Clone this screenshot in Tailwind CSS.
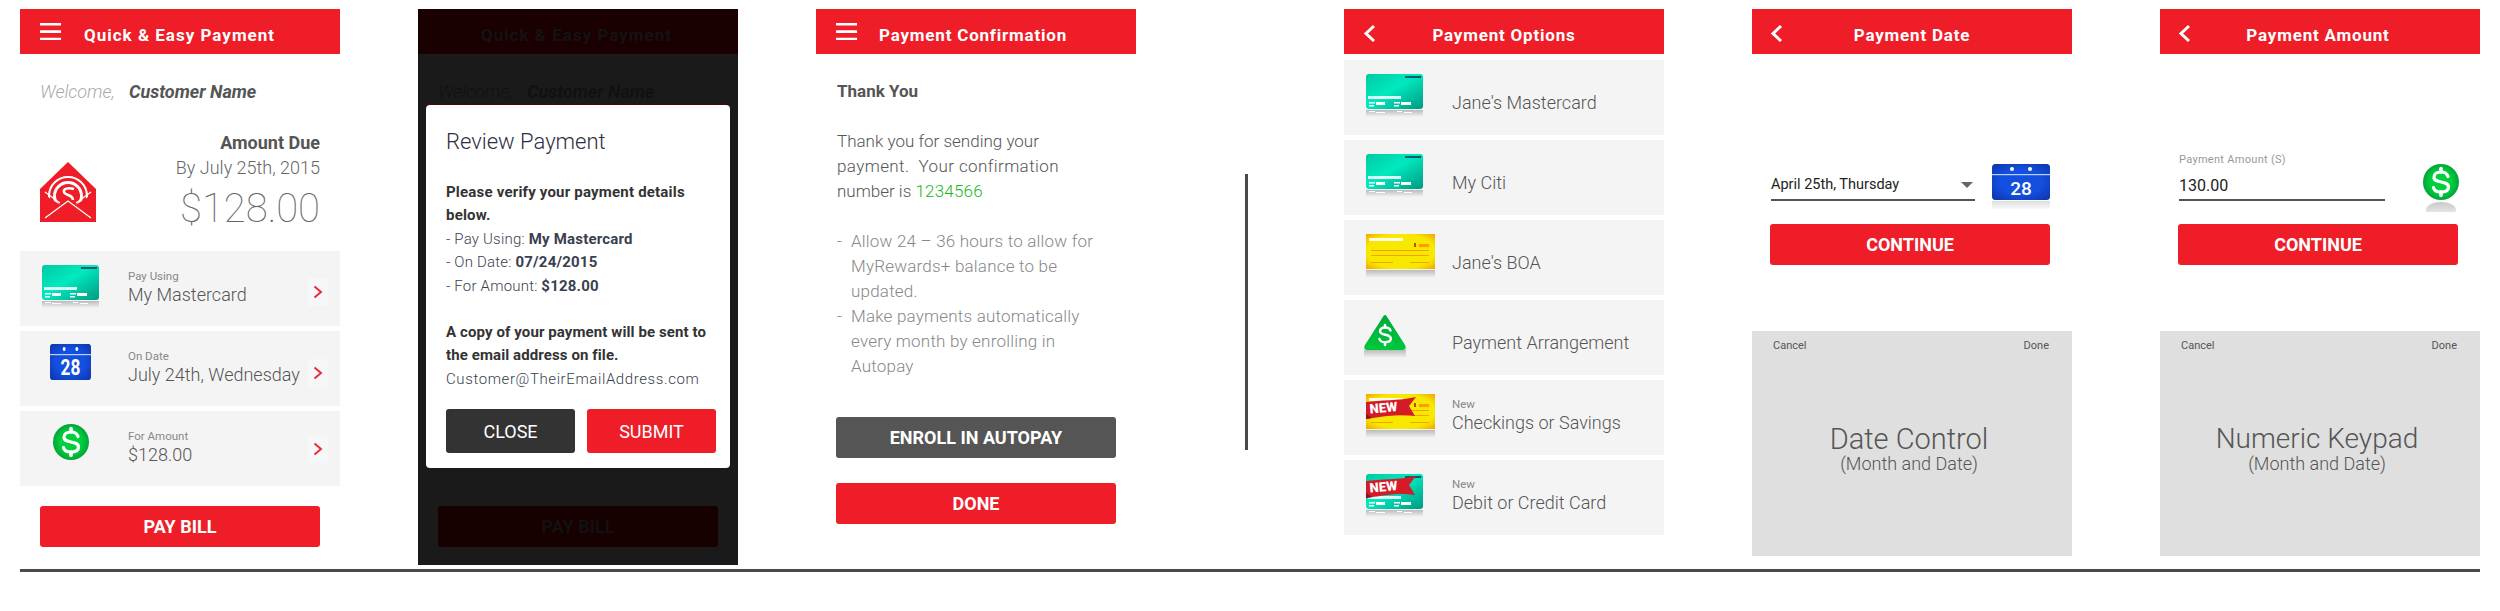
<!DOCTYPE html>
<html>

<head>
    <meta name="viewport" content="width=device-width,initial-scale=1.0">
    <title>Payment flow</title>
    <script src="https://cdn.jsdelivr.net/npm/@tailwindcss/browser@4"></script>
</head>

<body class="bg-white font-['Roboto',sans-serif] overflow-hidden">
    <!-- shared icons -->
    <svg class="absolute w-0 h-0">
        <defs>
            <linearGradient id="teal" x1="0" y1="0" x2="1" y2="1">
                <stop offset="0" stop-color="#00c9a0" />
                <stop offset="0.45" stop-color="#00eabf" />
                <stop offset="1" stop-color="#009a80" />
            </linearGradient>
            <linearGradient id="fade" x1="0" y1="0" x2="0" y2="1">
                <stop offset="0" stop-color="#bbb" />
                <stop offset="1" stop-color="#f4f4f4" />
            </linearGradient>
            <radialGradient id="yellow" r="0.7">
                <stop offset="0.7" stop-color="#f8e800" />
                <stop offset="1" stop-color="#f0a800" />
            </radialGradient>
            <radialGradient id="green" r="0.55">
                <stop offset="0.55" stop-color="#00cf3e" />
                <stop offset="1" stop-color="#009a35" />
            </radialGradient>
            <linearGradient id="greenup" x1="0" y1="0" x2="0" y2="1">
                <stop offset="0" stop-color="#00a83a" />
                <stop offset="1" stop-color="#00c83c" />
            </linearGradient>
            <radialGradient id="blue" r="0.7">
                <stop offset="0.5" stop-color="#1450e0" />
                <stop offset="1" stop-color="#0c34a8" />
            </radialGradient>
        </defs>
        <symbol id="card" viewBox="0 0 57 43">
            <rect y="0" width="57" height="35" rx="3" fill="url(#teal)" />
            <rect x="39" y="2" width="16" height="2" fill="#124" opacity=".7" />
            <rect x="2" y="22" width="33" height="3" fill="#fff" opacity=".85" />
            <path d="M3 28h6v1.500h-6zM10 28h9v3h-9zM28 28h6v1.500h-6zM35 28h10v3h-10zM3 31h5v1.500h-5zM28 31h5v1.500h-5z" fill="#fff" />
            <rect y="36" width="57" height="7" fill="url(#fade)" />
            <path d="M3 37h6v1h-6zM10 38h9v1h-9zM31 37h5v1h-5zM38 38h8v1h-8z" fill="#fff" />
        </symbol>
        <symbol id="check" viewBox="0 0 69 45">
            <rect width="69" height="35" fill="url(#yellow)" />
            <rect x="3" y="4" width="34" height="3" fill="#fff" opacity=".9" />
            <path d="M48 9h2v4h-2z" fill="#c40" />
            <path d="M53 10h10v3h-10z" fill="#f90" />
            <path d="M5 16h58v.7h-58zM5 21h58v.7h-58zM5 28h22v.7h-22zM44 28h19v.7h-19z" fill="#f58a00" />
            <rect y="36" width="69" height="8" fill="url(#fade)" />
        </symbol>
        <symbol id="ribbon" viewBox="0 0 50 25">
            <path d="M0 5C14 3 32 4 50 0L43 9L49 19C32 16 14 20 0 22Z" fill="#d41c28" />
            <path d="M0 17v5l6 -1z" fill="#8e1018" />
        </symbol>
        <symbol id="calendar" viewBox="0 0 58 45">
            <rect width="58" height="36" rx="3.500" fill="url(#blue)" />
            <rect y="10" width="58" height="1.200" fill="#bcd0ff" />
            <circle cx="20" cy="5" r="2" fill="#fff" />
            <circle cx="38" cy="5" r="2" fill="#fff" />
            <rect y="37" width="58" height="8" fill="url(#fade)" opacity=".5" />
        </symbol>
        <symbol id="coin" viewBox="0 0 36 48">
            <ellipse cx="18" cy="46" rx="15" ry="8" fill="url(#fade)" opacity=".8" />
            <circle cx="18" cy="18" r="18" fill="url(#green)" />
            <path d="M25 12.500C24 9 21 8 18 8C14 8 11 10 11 13.200C11 20 25.500 16 25.500 23C25.500 26.500 22 28 18 28C14 28 11 26.500 10.500 23.500" fill="none" stroke="#fff" stroke-width="3.200" stroke-linecap="round" />
            <path d="M18 4.500V8M18 28V31.500" stroke="#fff" stroke-width="3.600" stroke-linecap="round" />
        </symbol>
        <symbol id="triangle" viewBox="0 0 42 45">
            <rect x="0" y="36" width="42" height="8" fill="url(#fade)" />
            <path d="M21 1C21.500 1 22 1.500 22.500 2L41 31C42.500 34 41.500 36 39 36H3C.5 36 -.5 34 1 31L19.500 2C20 1.500 20.500 1 21 1Z" fill="url(#greenup)" />
            <path d="M26.500 16.500C26 14.500 24 13.500 21 13.500C18 13.500 16 15 16 17.200C16 22 26.800 19.500 26.800 24.500C26.800 27 24 28.200 21 28.200C18 28.200 16 27 15.500 25" fill="none" stroke="#fff" stroke-width="2.400" stroke-linecap="round" />
            <path d="M21 11V13.500M21 28.200V31" stroke="#fff" stroke-width="2.600" stroke-linecap="round" />
        </symbol>
        <symbol id="menu" viewBox="0 0 21 17">
            <path d="M0 0h21v2.500H0zM0 7.300h21v2.700H0zM0 14.700h21v2.300H0z" fill="#fff" />
        </symbol>
        <symbol id="back" viewBox="0 0 13 19">
            <path d="M11 2L3 9.500L11 17" fill="none" stroke="#fff" stroke-width="3" />
        </symbol>
        <symbol id="chev" viewBox="0 0 10 14">
            <path d="M1.500 1.500L8 7L1.500 12.500" fill="none" stroke="#ee2a34" stroke-width="2" />
        </symbol>
    </svg>

    <div class="h-[611px] w-[2500px] pt-[9px] pl-[20px] flex flex-col">
        <div class="flex h-[556px] text-[#555]">

            <!-- quick pay -->
            <section class="w-[320px] shrink-0 flex flex-col">
                <header class="h-[45px] bg-[#ee1d27] flex items-center pl-[20px] text-white">
                    <svg class="w-[21px] h-[17px]"><use href="#menu" /></svg>
                    <span class="ml-[23px] mt-[8px] text-[17px] font-bold tracking-[1px]">Quick &amp; Easy Payment</span>
                </header>
                <div class="px-[20px] h-[197px] flex flex-col">
                    <p class="mt-[26px] text-[18px] leading-[24px] italic"><span class="font-light text-[#aaa] mr-[14px]">Welcome,</span><span class="font-bold">Customer Name</span></p>
                    <div class="flex mt-[27px] justify-between items-end">
                        <svg class="w-[56px] h-[60px] mb-[11px]" viewBox="0 0 56 60">
                            <path d="M28 0L56 27V60H0V27Z" fill="#ee1d27" />
                            <circle cx="28" cy="34" r="19" fill="none" stroke="#fff" stroke-width="2" />
                            <circle cx="28" cy="34" r="13.500" fill="none" stroke="#fff" stroke-width="3" />
                            <path d="M34 27C28 25 23 27 24 30C25 34 33 32 33 38" fill="none" stroke="#fff" stroke-width="2.500" />
                            <path d="M0 30L22 44L28 39L34 44L56 30V60H0Z" fill="#ee1d27" />
                            <path d="M5 30L20 41M51 30L36 41M5 56L28 39L51 56" stroke="#fff" stroke-width="1.200" fill="none" />
                        </svg>
                        <div class="text-right">
                            <p class="text-[18px] leading-[24px] font-bold">Amount Due</p>
                            <p class="text-[18px] leading-[25px] font-light text-[#666]">By July 25th, 2015</p>
                            <p class="mt-[5px] text-[40px] leading-[48px] font-thin text-[#666]">$128.00</p>
                        </div>
                    </div>
                </div>
                <div class="flex flex-col gap-[5px]">
                    <div class="h-[75px] bg-[#f4f4f5] flex relative">
                        <svg class="w-[57px] h-[43px] ml-[22px] mt-[14px]"><use href="#card" /></svg>
                        <div class="ml-[29px] mt-[18px]">
                            <p class="text-[11.500px] leading-[14px] text-[#888]">Pay Using</p>
                            <p class="text-[18px] leading-[23px] font-light">My Mastercard</p>
                        </div>
                        <span class="absolute left-[288px] top-[27px] w-[20px] h-[28px] bg-[#f6f7f9] flex items-center justify-center"><svg class="w-[10px] h-[14px]"><use href="#chev" /></svg></span>
                    </div>
                    <div class="h-[75px] bg-[#f4f4f5] flex relative">
                        <svg class="w-[41px] h-[36px] ml-[30px] mt-[13px]" viewBox="0 0 58 36" preserveAspectRatio="none"><use href="#calendar" width="58" height="45" /><text x="29" y="31" text-anchor="middle" font-size="22" font-weight="700" fill="#fff" font-family="Roboto" textLength="28" lengthAdjust="spacingAndGlyphs">28</text></svg>
                        <div class="ml-[37px] mt-[18px]">
                            <p class="text-[11.500px] leading-[14px] text-[#888]">On Date</p>
                            <p class="text-[18px] leading-[23px] font-light whitespace-nowrap">July 24th, Wednesday</p>
                        </div>
                        <span class="absolute left-[288px] top-[28px] w-[20px] h-[28px] bg-[#f6f7f9] flex items-center justify-center"><svg class="w-[10px] h-[14px]"><use href="#chev" /></svg></span>
                    </div>
                    <div class="h-[75px] bg-[#f4f4f5] flex relative">
                        <svg class="w-[36px] h-[36px] ml-[33px] mt-[13px]" viewBox="0 0 36 36"><use href="#coin" width="36" height="48" /></svg>
                        <div class="ml-[39px] mt-[18px]">
                            <p class="text-[11.500px] leading-[14px] text-[#888]">For Amount</p>
                            <p class="text-[18px] leading-[23px] font-light">$128.00</p>
                        </div>
                        <span class="absolute left-[288px] top-[24px] w-[20px] h-[28px] bg-[#f6f7f9] flex items-center justify-center"><svg class="w-[10px] h-[14px]"><use href="#chev" /></svg></span>
                    </div>
                </div>
                <button class="mx-[20px] mt-[20px] h-[41px] rounded-[3px] bg-[#ee1d27] text-white text-[18px] font-bold">PAY BILL</button>
            </section>

            <!-- review dialog over dimmed quick pay -->
            <section class="w-[320px] h-[556px] shrink-0 ml-[78px] flex flex-col relative bg-[#1a1a1a]">
                <header class="h-[45px] bg-[#1a0000] flex items-center justify-center text-[#131313]">
                    <span class="ml-[-3px] mt-[8px] text-[17px] font-bold tracking-[1px]">Quick &amp; Easy Payment</span>
                </header>
                <p class="px-[20px] mt-[26px] text-[18px] leading-[24px] italic text-[#111]"><span class="font-light mr-[14px]">Welcome,</span><span class="font-bold">Customer Name</span></p>
                <button class="absolute left-[20px] right-[20px] top-[497px] h-[41px] rounded-[3px] bg-[#170000] text-[#111] text-[18px] font-bold">PAY BILL</button>
                <div class="absolute left-[8px] top-[96px] w-[304px] h-[363px] bg-white rounded-[4px] px-[20px] shadow-[0_-1px_0_#500]">
                    <h2 class="mt-[22px] text-[22px] leading-[30px] font-light text-[#2b3042]">Review Payment</h2>
                    <div class="mt-[24px] text-[15px] leading-[23.400px] text-[#3a3f50] font-light tracking-[0.2px]">
                        <p class="font-bold text-[#333]">Please verify your payment details below.</p>
                        <p>- Pay Using: <b class="font-bold">My Mastercard</b></p>
                        <p>- On Date: <b class="font-bold">07/24/2015</b></p>
                        <p>- For Amount: <b class="font-bold">$128.00</b></p>
                        <p class="mt-[23px] font-bold text-[#333] tracking-[0.1px]">A copy of your payment will be sent to the email address on file.</p>
                        <p class="whitespace-nowrap tracking-[0.6px]">Customer@TheirEmailAddress.com</p>
                    </div>
                    <div class="mt-[18px] flex gap-[12px]">
                        <button class="w-[129px] shrink-0 h-[44px] rounded-[3px] bg-[#333] text-white text-[18px]">CLOSE</button>
                        <button class="w-[129px] shrink-0 h-[44px] rounded-[3px] bg-[#ee1d27] text-white text-[18px]">SUBMIT</button>
                    </div>
                </div>
            </section>

            <!-- confirmation -->
            <section class="w-[320px] shrink-0 ml-[78px] flex flex-col">
                <header class="h-[45px] bg-[#ee1d27] flex items-center pl-[20px] text-white">
                    <svg class="w-[21px] h-[17px]"><use href="#menu" /></svg>
                    <span class="ml-[22px] mt-[8px] text-[17px] font-bold tracking-[0.8px]">Payment Confirmation</span>
                </header>
                <div class="pl-[21px] pr-[24px]">
                    <p class="mt-[25px] text-[17px] leading-[25px] font-bold">Thank You</p>
                    <p class="mt-[25px] text-[17px] leading-[25px] font-light">Thank you for sending your<br><span class="tracking-[0.4px]">payment.&nbsp;&nbsp;Your confirmation</span><br>number is <span class="text-[#1bb81b] tracking-[0.2px]">1234566</span></p>
                    <ul class="mt-[25px] text-[17px] leading-[25px] font-light text-[#888] tracking-[0.2px]">
                        <li class="flex"><span class="w-[14px] shrink-0">-</span><span>Allow 24 – 36 hours to allow for MyRewards+ balance to be updated.</span></li>
                        <li class="flex"><span class="w-[14px] shrink-0">-</span><span>Make payments automatically every month by enrolling in Autopay</span></li>
                    </ul>
                </div>
                <div class="px-[20px] mt-[38px] flex flex-col gap-[25px]">
                    <button class="h-[41px] rounded-[3px] bg-[#555] text-white text-[18px] font-bold">ENROLL IN AUTOPAY</button>
                    <button class="h-[41px] rounded-[3px] bg-[#ee1d27] text-white text-[18px] font-bold">DONE</button>
                </div>
            </section>

            <div class="w-[3px] h-[276px] mt-[165px] ml-[109px] mr-[96px] bg-[#4a4a4a] shrink-0"></div>

            <!-- options -->
            <section class="w-[320px] shrink-0 flex flex-col">
                <header class="h-[45px] bg-[#ee1d27] flex items-center justify-center relative text-white">
                    <svg class="absolute left-[19px] top-[15px] w-[13px] h-[19px]"><use href="#back" /></svg>
                    <span class="mt-[8px] text-[17px] font-bold tracking-[0.8px]">Payment Options</span>
                </header>
                <div class="mt-[6px] flex flex-col gap-[5px]">
                    <div class="h-[75px] bg-[#f4f4f4] flex">
                        <div class="w-[108px] pl-[22px] pt-[14px]"><svg class="w-[57px] h-[43px]"><use href="#card" /></svg></div>
                        <p class="mt-[30px] text-[18px] leading-[26px] font-light">Jane's Mastercard</p>
                    </div>
                    <div class="h-[75px] bg-[#f4f4f4] flex">
                        <div class="w-[108px] pl-[22px] pt-[14px]"><svg class="w-[57px] h-[43px]"><use href="#card" /></svg></div>
                        <p class="mt-[30px] text-[18px] leading-[26px] font-light">My Citi</p>
                    </div>
                    <div class="h-[75px] bg-[#f4f4f4] flex">
                        <div class="w-[108px] pl-[22px] pt-[14px]"><svg class="w-[69px] h-[45px]"><use href="#check" /></svg></div>
                        <p class="mt-[30px] text-[18px] leading-[26px] font-light">Jane's BOA</p>
                    </div>
                    <div class="h-[75px] bg-[#f4f4f4] flex">
                        <div class="w-[108px] pl-[20px] pt-[14px]"><svg class="w-[42px] h-[45px]"><use href="#triangle" /></svg></div>
                        <p class="mt-[30px] text-[18px] leading-[26px] font-light">Payment Arrangement</p>
                    </div>
                    <div class="h-[75px] bg-[#f4f4f4] flex">
                        <div class="w-[108px] pl-[22px] pt-[14px] relative"><svg class="w-[69px] h-[45px]"><use href="#check" /></svg><svg class="absolute left-[22px] top-[17px] w-[50px] h-[25px]" viewBox="0 0 50 25"><use href="#ribbon" width="50" height="25" /><text x="4" y="16.500" font-size="13" font-weight="900" fill="#fff" transform="rotate(-5 4 16)" font-family="Roboto">NEW</text></svg></div>
                        <div class="mt-[17px]">
                            <p class="text-[11.500px] leading-[14px] text-[#888]">New</p>
                            <p class="text-[18px] leading-[24px] font-light">Checkings or Savings</p>
                        </div>
                    </div>
                    <div class="h-[75px] bg-[#f4f4f4] flex">
                        <div class="w-[108px] pl-[22px] pt-[14px] relative"><svg class="w-[57px] h-[43px]"><use href="#card" /></svg><svg class="absolute left-[22px] top-[16px] w-[50px] h-[25px]" viewBox="0 0 50 25"><use href="#ribbon" width="50" height="25" /><text x="4" y="16.500" font-size="13" font-weight="900" fill="#fff" transform="rotate(-5 4 16)" font-family="Roboto">NEW</text></svg></div>
                        <div class="mt-[17px]">
                            <p class="text-[11.500px] leading-[14px] text-[#888]">New</p>
                            <p class="text-[18px] leading-[24px] font-light">Debit or Credit Card</p>
                        </div>
                    </div>
                </div>
            </section>

            <!-- date -->
            <section class="w-[320px] shrink-0 ml-[88px] flex flex-col">
                <header class="h-[45px] bg-[#ee1d27] flex items-center justify-center relative text-white">
                    <svg class="absolute left-[18px] top-[15px] w-[13px] h-[19px]"><use href="#back" /></svg>
                    <span class="mt-[8px] text-[17px] font-bold tracking-[0.8px]">Payment Date</span>
                </header>
                <div class="pl-[18px] pr-[22px] h-[277px] flex flex-col">
                    <div class="mt-[110px] flex h-[45px]">
                        <div class="w-[205px] ml-[1px] h-[37px] border-b-2 border-[#555] flex items-end justify-between pb-[4px] pr-[2px]">
                            <span class="text-[14.500px] leading-[20px] text-[#222]">April 25th, Thursday</span>
                            <span class="w-0 h-0 mb-[7px] border-x-[6px] border-x-transparent border-t-[6px] border-t-[#666]"></span>
                        </div>
                        <svg class="w-[58px] h-[45px] ml-[17px] shrink-0" viewBox="0 0 58 45"><use href="#calendar" width="58" height="45" /><text x="29" y="31" text-anchor="middle" font-size="19" font-weight="500" fill="#fff" font-family="Roboto">28</text></svg>
                    </div>
                    <button class="mt-[15px] h-[41px] rounded-[3px] bg-[#ee1d27] text-white text-[18px] font-bold">CONTINUE</button>
                </div>
                <div class="h-[225px] bg-[#dfdfdf] px-[21px] pt-[8px]">
                    <div class="flex justify-between text-[11px] leading-[13px] pr-[2px]"><span>Cancel</span><span>Done</span></div>
                    <div class="mt-[71px] text-center pr-[6px] font-light">
                        <p class="text-[29px] leading-[32px]">Date Control</p>
                        <p class="text-[18px] leading-[17px]">(Month and Date)</p>
                    </div>
                </div>
            </section>

            <!-- amount -->
            <section class="w-[320px] shrink-0 ml-[88px] flex flex-col">
                <header class="h-[45px] bg-[#ee1d27] flex items-center justify-center relative text-white">
                    <svg class="absolute left-[18px] top-[15px] w-[13px] h-[19px]"><use href="#back" /></svg>
                    <span class="mr-[4px] mt-[8px] text-[17px] font-bold tracking-[0.8px]">Payment Amount</span>
                </header>
                <div class="px-[18px] h-[277px] flex flex-col">
                    <div class="mt-[99px] flex h-[56px]">
                        <div class="w-[206px] ml-[1px] h-[48px] border-b-2 border-[#555] flex flex-col">
                            <span class="text-[11px] leading-[14px] text-[#999] tracking-[0.3px]">Payment Amount (S)</span>
                            <span class="mt-[9px] text-[16px] leading-[20px] text-[#222]">130.00</span>
                        </div>
                        <svg class="w-[36px] h-[48px] ml-[38px] mt-[11px]" viewBox="0 0 36 48"><use href="#coin" width="36" height="48" /></svg>
                    </div>
                    <button class="mt-[15px] mr-[4px] h-[41px] rounded-[3px] bg-[#ee1d27] text-white text-[18px] font-bold">CONTINUE</button>
                </div>
                <div class="h-[225px] bg-[#dfdfdf] px-[21px] pt-[8px]">
                    <div class="flex justify-between text-[11px] leading-[13px] pr-[2px]"><span>Cancel</span><span>Done</span></div>
                    <div class="mt-[71px] text-center pr-[6px] font-light">
                        <p class="text-[28px] leading-[32px]">Numeric Keypad</p>
                        <p class="text-[18px] leading-[17px]">(Month and Date)</p>
                    </div>
                </div>
            </section>
        </div>

        <div class="mt-[4px] w-[2460px] h-[3px] bg-[#4a4a4a]"></div>
    </div>
</body>

</html>
